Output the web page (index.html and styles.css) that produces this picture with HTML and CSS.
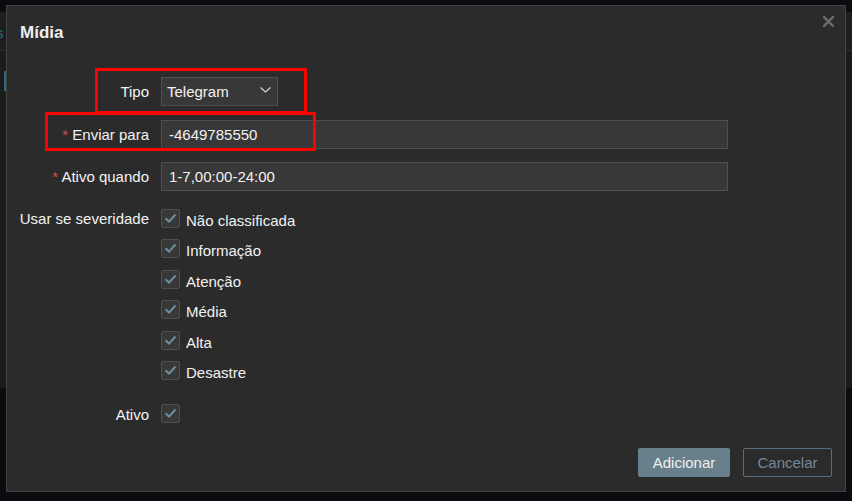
FILE: index.html
```html
<!DOCTYPE html>
<html lang="pt">
<head>
<meta charset="utf-8">
<title>Mídia</title>
<link rel="stylesheet" href="styles.css">
</head>
<body>
<div class="page">
  <div class="page-head"><span class="page-link">s</span></div>
  <div class="page-body"><span class="page-bar"></span></div>
</div>

<div class="dialog">
  <div class="dlg-head">
    <h2 class="dlg-title">Mídia</h2>
    <button class="dlg-close" type="button" aria-label="Fechar">
      <svg width="11" height="11" viewBox="0 0 11 11"><path d="M1 1 L10 10 M10 1 L1 10" stroke="#6c6c6c" stroke-width="2.4" stroke-linecap="square"/></svg>
    </button>
  </div>

  <form class="form">
    <div class="row">
      <label class="lbl">Tipo</label>
      <div class="select">
        <span>Telegram</span>
        <svg class="chev" width="11" height="6" viewBox="0 0 11 6"><path d="M0.5 0.5 L5.5 5 L10.5 0.5" fill="none" stroke="#d8d8d8" stroke-width="1.1"/></svg>
      </div>
    </div>
    <div class="row">
      <label class="lbl"><span class="req">*</span> Enviar para</label>
      <div class="input">-4649785550</div>
    </div>
    <div class="row">
      <label class="lbl"><span class="req">*</span> Ativo quando</label>
      <div class="input">1-7,00:00-24:00</div>
    </div>
    <div class="row row-sev">
      <label class="lbl lbl-check">Usar se severidade</label>
      <ul class="checks">
        <li class="check"><span class="box"><svg width="19" height="19" viewBox="0 0 19 19"><path d="M4.5 9.3 L8 12.6 L14.5 5.5" fill="none" stroke="#6f8fa0" stroke-width="2"/></svg></span><span class="ctext">Não classificada</span></li>
        <li class="check"><span class="box"><svg width="19" height="19" viewBox="0 0 19 19"><path d="M4.5 9.3 L8 12.6 L14.5 5.5" fill="none" stroke="#6f8fa0" stroke-width="2"/></svg></span><span class="ctext">Informação</span></li>
        <li class="check"><span class="box"><svg width="19" height="19" viewBox="0 0 19 19"><path d="M4.5 9.3 L8 12.6 L14.5 5.5" fill="none" stroke="#6f8fa0" stroke-width="2"/></svg></span><span class="ctext">Atenção</span></li>
        <li class="check"><span class="box"><svg width="19" height="19" viewBox="0 0 19 19"><path d="M4.5 9.3 L8 12.6 L14.5 5.5" fill="none" stroke="#6f8fa0" stroke-width="2"/></svg></span><span class="ctext">Média</span></li>
        <li class="check"><span class="box"><svg width="19" height="19" viewBox="0 0 19 19"><path d="M4.5 9.3 L8 12.6 L14.5 5.5" fill="none" stroke="#6f8fa0" stroke-width="2"/></svg></span><span class="ctext">Alta</span></li>
        <li class="check"><span class="box"><svg width="19" height="19" viewBox="0 0 19 19"><path d="M4.5 9.3 L8 12.6 L14.5 5.5" fill="none" stroke="#6f8fa0" stroke-width="2"/></svg></span><span class="ctext">Desastre</span></li>
      </ul>
    </div>
    <div class="row row-active">
      <label class="lbl lbl-check lbl-active">Ativo</label>
      <span class="box"><svg width="19" height="19" viewBox="0 0 19 19"><path d="M4.5 9.3 L8 12.6 L14.5 5.5" fill="none" stroke="#6f8fa0" stroke-width="2"/></svg></span>
    </div>
  </form>

  <div class="dlg-foot">
    <button class="btn btn-primary" type="button">Adicionar</button>
    <button class="btn btn-alt" type="button">Cancelar</button>
  </div>
</div>

<div class="mark mark-1"></div>
<div class="mark mark-2"></div>
</body>
</html>
```

FILE: styles.css
```css
* { box-sizing: border-box; }
html, body { margin: 0; padding: 0; }
body {
  width: 852px;
  height: 501px;
  overflow: hidden;
  background: #0b0c0f;
  font-family: "Liberation Sans", Arial, sans-serif;
  font-size: 15px;
  color: #f2f2f2;
  position: relative;
}

.page { padding-top: 12px; }
.page-head {
  height: 39px;
  background: #1d1e1f;
  border-bottom: 1px solid #2c2c2c;
  padding-top: 13px;
}
.page-link {
  display: block;
  padding-left: 1px;
  color: #2b6f8d;
  font-size: 15px;
  line-height: 15px;
  width: 6px;
  overflow: hidden;
  text-indent: -5px;
}
.page-body {
  height: 337px;
  background: #1b1b1b;
  padding-top: 20px;
}
.page-bar {
  display: block;
  width: 2px;
  height: 20px;
  margin-left: 4px;
  background: #2f6a84;
}

.dialog {
  position: absolute;
  left: 6px;
  top: 5px;
  width: 840px;
  height: 487px;
  background: #2b2b2b;
  border: 1px solid #434343;
  display: flex;
  flex-direction: column;
}

.dlg-head {
  height: 54px;
  display: flex;
  justify-content: space-between;
  align-items: flex-start;
  padding: 17px 11px 0 13px;
}
.dlg-title {
  margin: 0;
  font-size: 17px;
  line-height: 20px;
  font-weight: bold;
  color: #eeeeee;
}
.dlg-close {
  margin: 0;
  padding: 0;
  border: 0;
  background: none;
  width: 11px;
  height: 11px;
  margin-top: -7px;
  display: flex;
}

.form {
  padding: 17px 0 0 12px;
  display: flex;
  flex-direction: column;
}
.row {
  display: flex;
  align-items: flex-start;
  gap: 12px;
  margin-bottom: 13.5px;
}
.lbl {
  width: 130px;
  flex: none;
  text-align: right;
  line-height: 29px;
  white-space: nowrap;
}
.lbl-check { line-height: 19px; }
.lbl-active { padding-top: 1px; }
.req { color: #d64e4e; }

.select {
  width: 117px;
  height: 29px;
  background: #383838;
  border: 1px solid #4f4f4f;
  display: flex;
  align-items: center;
  justify-content: space-between;
  padding: 0 6px 0 5px;
  line-height: 27px;
}
.chev { margin-top: -3px; }

.input {
  width: 567px;
  height: 29px;
  background: #383838;
  border: 1px solid #4f4f4f;
  padding: 0 7px;
  line-height: 27px;
}

.row-sev { margin-top: 4.5px; margin-bottom: 0; }
.checks {
  list-style: none;
  margin: 0;
  padding: 0;
  display: flex;
  flex-direction: column;
  gap: 11.4px;
}
.check {
  display: flex;
  align-items: flex-start;
  gap: 6px;
  height: 19px;
}
.ctext {
  line-height: 19px;
  padding-top: 2px;
}
.box {
  width: 19px;
  height: 19px;
  flex: none;
  background: #383838;
  border: 1px solid #4f4f4f;
  border-radius: 2px;
  display: block;
  position: relative;
}
.box svg { position: absolute; left: -1px; top: -1px; }

.row-active { margin-top: 24px; }

.dlg-foot {
  margin-top: auto;
  display: flex;
  justify-content: flex-end;
  gap: 13px;
  padding: 0 13px 14px 0;
}
.btn {
  height: 29px;
  font-family: "Liberation Sans", Arial, sans-serif;
  font-size: 15px;
  border-radius: 2px;
  padding: 0;
  margin: 0;
}
.btn-primary {
  width: 92px;
  background: #687f8c;
  border: 1px solid #687f8c;
  color: #f0f0f0;
}
.btn-alt {
  width: 89px;
  background: transparent;
  border: 1px solid #5a6f7c;
  color: #73889a;
}

.mark {
  position: absolute;
  border: 3px solid #ff0000;
}
.mark-1 { left: 95px; top: 68px; width: 212px; height: 46px; }
.mark-2 { left: 45px; top: 112px; width: 271px; height: 39px; }
```
